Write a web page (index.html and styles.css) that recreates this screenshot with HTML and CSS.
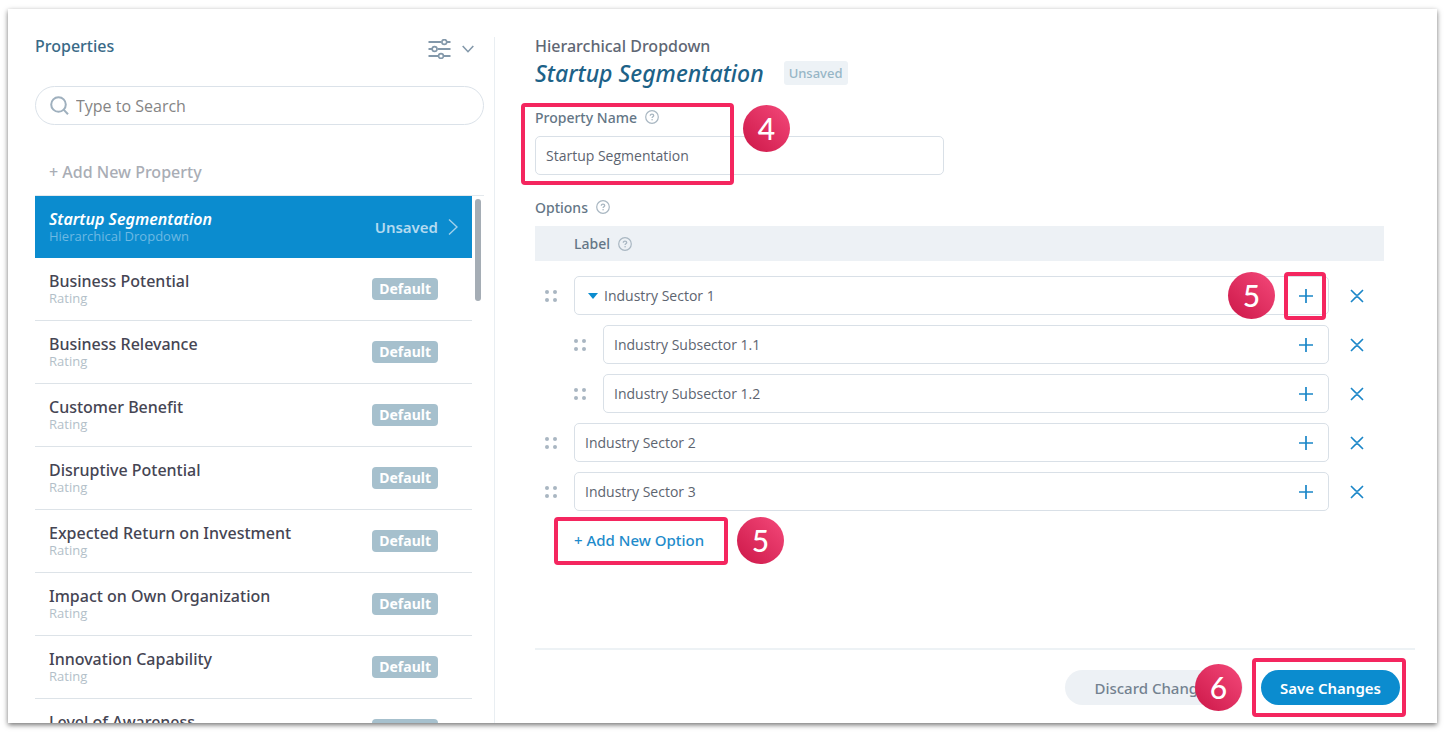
FILE: index.html
```html
<!DOCTYPE html>
<html lang="en">
<head>
    <meta charset="UTF-8">
    <meta name="viewport" content="width=device-width, initial-scale=1.0">
    <title>Properties</title>
    <link rel="stylesheet" href="styles.css">
</head>
<body>
    <!-- shared icons -->
    <svg class="sprite" aria-hidden="true">
        <symbol id="icon-help" viewBox="0 0 14 14">
            <circle cx="7" cy="7" r="6.3" fill="none" stroke="currentColor" stroke-width="1.2"/>
            <path d="M5.3 5.7c0-1 .7-1.6 1.7-1.6s1.7.6 1.7 1.5c0 1.2-1.6 1.2-1.6 2.4" fill="none" stroke="currentColor" stroke-width="1.3"/>
            <circle cx="7.1" cy="9.8" r=".8" fill="currentColor"/>
        </symbol>
        <symbol id="icon-plus" viewBox="0 0 14 14">
            <path d="M7 0v14M0 7h14" fill="none" stroke="currentColor" stroke-width="1.7"/>
        </symbol>
        <symbol id="icon-remove" viewBox="0 0 14 14">
            <path d="M1 1l4.600 4.600q1.400 1.200 2.800 0L13 1M1 13l4.600-4.600q1.400-1.200 2.800 0L13 13" fill="none" stroke="currentColor" stroke-width="1.6"/>
        </symbol>
        <symbol id="icon-drag" viewBox="0 0 12 12">
            <g fill="currentColor">
                <circle cx="2" cy="2" r="2"/>
                <circle cx="10" cy="2" r="2"/>
                <circle cx="2" cy="10" r="2"/>
                <circle cx="10" cy="10" r="2"/>
            </g>
        </symbol>
    </svg>

    <div class="dialog">
        <aside class="sidebar">
            <div class="sidebar-header">
                <h2>Properties</h2>
                <button class="filter-button" type="button" aria-label="Filter properties">
                    <svg width="23" height="20" viewBox="0 0 23 20" fill="none" stroke="currentColor" stroke-width="1.8">
                        <path d="M.5 3h13M19 3h3.500M.5 10h3.500M9.500 10h13M.5 17h9.500M16 17h6.500"/>
                        <circle cx="16.300" cy="3" r="2.400" stroke-width="1.600"/>
                        <circle cx="6.600" cy="10" r="2.400" stroke-width="1.600"/>
                        <circle cx="13" cy="17" r="2.400" stroke-width="1.600"/>
                    </svg>
                    <svg width="12" height="8" viewBox="0 0 12 8" fill="none" stroke="currentColor" stroke-width="1.6">
                        <path d="M.7 1L6 6.700 11.300 1"/>
                    </svg>
                </button>
            </div>

            <div class="search">
                <svg width="19" height="19" viewBox="0 0 19 19" fill="none" stroke="currentColor" stroke-width="2">
                    <circle cx="8.500" cy="8.500" r="7.300"/>
                    <path d="M13.600 13.600l4.400 4.600"/>
                </svg>
                <input type="text" placeholder="Type to Search" aria-label="Search properties">
            </div>

            <button class="add-property" type="button">+ Add New Property</button>

            <div class="list-wrap">
                <ul class="property-list">
                    <li class="active">
                        <a href="#">
                            <span class="property-text"><span class="name">Startup Segmentation</span><span class="type">Hierarchical Dropdown</span></span>
                            <span class="state">Unsaved</span>
                            <svg class="arrow" width="10" height="16" viewBox="0 0 10 16" fill="none" stroke="currentColor" stroke-width="1.400">
                                <path d="M1 .5L9 8 1 15.500"/>
                            </svg>
                        </a>
                    </li>
                    <li><a href="#"><span class="property-text"><span class="name">Business Potential</span><span class="type">Rating</span></span><span class="tag">Default</span></a></li>
                    <li><a href="#"><span class="property-text"><span class="name">Business Relevance</span><span class="type">Rating</span></span><span class="tag">Default</span></a></li>
                    <li><a href="#"><span class="property-text"><span class="name">Customer Benefit</span><span class="type">Rating</span></span><span class="tag">Default</span></a></li>
                    <li><a href="#"><span class="property-text"><span class="name">Disruptive Potential</span><span class="type">Rating</span></span><span class="tag">Default</span></a></li>
                    <li><a href="#"><span class="property-text"><span class="name">Expected Return on Investment</span><span class="type">Rating</span></span><span class="tag">Default</span></a></li>
                    <li><a href="#"><span class="property-text"><span class="name">Impact on Own Organization</span><span class="type">Rating</span></span><span class="tag">Default</span></a></li>
                    <li><a href="#"><span class="property-text"><span class="name">Innovation Capability</span><span class="type">Rating</span></span><span class="tag">Default</span></a></li>
                    <li><a href="#"><span class="property-text"><span class="name">Level of Awareness</span><span class="type">Rating</span></span><span class="tag">Default</span></a></li>
                </ul>
                <div class="scroll-thumb"></div>
            </div>
        </aside>

        <main class="editor">
            <p class="kind">Hierarchical Dropdown</p>
            <div class="title-row">
                <h1>Startup Segmentation</h1>
                <span class="unsaved">Unsaved</span>
            </div>

            <div class="field">
                <div class="caption">
                    <label for="property-name">Property Name</label>
                    <svg class="help"><use href="#icon-help"/></svg>
                </div>
                <input type="text" id="property-name" value="Startup Segmentation">
                <div class="marker marker-name"></div>
                <span class="step step-name">4</span>
            </div>

            <div class="caption options-caption">
                <span>Options</span>
                <svg class="help"><use href="#icon-help"/></svg>
            </div>
            <div class="options">
                <div class="caption options-head">
                    <span>Label</span>
                    <svg class="help"><use href="#icon-help"/></svg>
                </div>
                <ul class="option-list">
                    <li>
                        <svg class="drag"><use href="#icon-drag"/></svg>
                        <div class="option-box">
                            <button class="toggle" type="button" aria-label="Collapse"></button>
                            <input type="text" value="Industry Sector 1" aria-label="Option label">
                            <button class="icon-button" type="button" aria-label="Add sub-option"><svg><use href="#icon-plus"/></svg></button>
                            <div class="marker marker-plus"></div>
                            <span class="step step-plus">5</span>
                        </div>
                        <button class="icon-button" type="button" aria-label="Remove option"><svg><use href="#icon-remove"/></svg></button>
                    </li>
                    <li class="sub">
                        <svg class="drag"><use href="#icon-drag"/></svg>
                        <div class="option-box">
                            <input type="text" value="Industry Subsector 1.1" aria-label="Option label">
                            <button class="icon-button" type="button" aria-label="Add sub-option"><svg><use href="#icon-plus"/></svg></button>
                        </div>
                        <button class="icon-button" type="button" aria-label="Remove option"><svg><use href="#icon-remove"/></svg></button>
                    </li>
                    <li class="sub">
                        <svg class="drag"><use href="#icon-drag"/></svg>
                        <div class="option-box">
                            <input type="text" value="Industry Subsector 1.2" aria-label="Option label">
                            <button class="icon-button" type="button" aria-label="Add sub-option"><svg><use href="#icon-plus"/></svg></button>
                        </div>
                        <button class="icon-button" type="button" aria-label="Remove option"><svg><use href="#icon-remove"/></svg></button>
                    </li>
                    <li>
                        <svg class="drag"><use href="#icon-drag"/></svg>
                        <div class="option-box">
                            <input type="text" value="Industry Sector 2" aria-label="Option label">
                            <button class="icon-button" type="button" aria-label="Add sub-option"><svg><use href="#icon-plus"/></svg></button>
                        </div>
                        <button class="icon-button" type="button" aria-label="Remove option"><svg><use href="#icon-remove"/></svg></button>
                    </li>
                    <li>
                        <svg class="drag"><use href="#icon-drag"/></svg>
                        <div class="option-box">
                            <input type="text" value="Industry Sector 3" aria-label="Option label">
                            <button class="icon-button" type="button" aria-label="Add sub-option"><svg><use href="#icon-plus"/></svg></button>
                        </div>
                        <button class="icon-button" type="button" aria-label="Remove option"><svg><use href="#icon-remove"/></svg></button>
                    </li>
                </ul>
                <div class="add-option-wrap">
                    <button class="add-option" type="button">+ Add New Option</button>
                    <div class="marker marker-option"></div>
                    <span class="step step-option">5</span>
                </div>
            </div>

            <div class="footer">
                <button class="discard" type="button">Discard Changes</button>
                <div class="save-wrap">
                    <button class="save" type="button">Save Changes</button>
                    <div class="marker marker-save"></div>
                    <span class="step step-save">6</span>
                </div>
            </div>
        </main>
    </div>
</body>
</html>
```
FILE: styles.css
```css
* {
    box-sizing: border-box;
}

body {
    font-family: "Noto Sans", "Open Sans", sans-serif;
    font-size: 14px;
    color: #5d6470;
    background-color: #fff;
    margin: 0;
    padding: 9px 8px;
    height: 100vh;
}

button,
input {
    font-family: inherit;
    font-size: inherit;
    color: inherit;
    background: none;
    border: none;
    padding: 0;
    margin: 0;
}

button {
    cursor: pointer;
}

input {
    font-family: "Open Sans", "Noto Sans", sans-serif;
    outline: none;
    min-width: 0;
}

h1,
h2,
p,
ul {
    margin: 0;
    padding: 0;
}

ul {
    list-style: none;
}

svg {
    display: block;
    flex: none;
}

.sprite {
    display: none;
}

.dialog {
    display: flex;
    height: 100%;
    background-color: #fff;
    box-shadow: 0 2px 5px rgba(0, 0, 0, 0.55);
}

/* Sidebar */
.sidebar {
    display: flex;
    flex-direction: column;
    flex: 0 0 476px;
    padding: 25px 0 0 27px;
    overflow: hidden;
}

.sidebar-header {
    display: flex;
    justify-content: space-between;
    height: 52px;
    padding-right: 10px;
}

.sidebar-header h2 {
    font-size: 16px;
    line-height: 24px;
    font-weight: 500;
    color: #396a87;
}

.filter-button {
    display: flex;
    align-items: center;
    gap: 11px;
    height: 30px;
    color: #8398aa;
}

.search {
    display: flex;
    align-items: center;
    gap: 7px;
    height: 39px;
    padding: 0 14px;
    border: 1px solid #dbe2e9;
    border-radius: 20px;
    color: #9fb0be;
}

.search input {
    flex: 1;
    font-size: 16px;
    color: #777;
}

.search input::placeholder {
    color: #858585;
    opacity: 1;
}

.add-property {
    height: 24px;
    margin: 35px 0 11px;
    padding-left: 14px;
    text-align: left;
    font-size: 16px;
    font-weight: 500;
    color: #a9adb5;
}

.list-wrap {
    position: relative;
    flex: 1;
    min-height: 0;
    overflow: hidden;
    border-top: 1px solid #e4e9ed;
}

.property-list {
    margin-right: 12px;
}

.property-list a {
    display: flex;
    align-items: center;
    height: 63px;
    padding: 0 34px 0 14px;
    border-bottom: 1px solid #dde3e8;
    color: #454553;
    text-decoration: none;
}

.property-text {
    display: flex;
    flex-direction: column;
    flex: 1;
}

.name {
    font-size: 16px;
    line-height: 18px;
    font-weight: 500;
}

.type {
    font-family: "Open Sans", "Noto Sans", sans-serif;
    font-size: 13px;
    line-height: 16px;
    color: #b3bfc9;
}

.tag {
    padding: 0 7px;
    border-radius: 4px;
    background-color: #a6c0cd;
    color: #fff;
    line-height: 22px;
    font-weight: 700;
}

.property-list .active a {
    height: 62px;
    padding-right: 14px;
    border-bottom: none;
    background-color: #0b8ccf;
    color: #fff;
}

.active .name {
    font-weight: 600;
    font-style: italic;
}

.active .type {
    color: #6db9e3;
}

.state {
    font-size: 15px;
    font-weight: 600;
    color: #b3daf0;
}

.arrow {
    margin-left: 10px;
    color: #a0d1ec;
}

.scroll-thumb {
    position: absolute;
    top: 3px;
    right: 3px;
    width: 6px;
    height: 102px;
    border-radius: 3px;
    background-color: #a5adb5;
}

/* Editor */
.editor {
    display: flex;
    flex-direction: column;
    flex: 1;
    min-width: 0;
    margin: 28px 0 0 10px;
    padding: 0 22px 0 40px;
    border-left: 1px solid #e9eef2;
}

.kind {
    font-size: 16px;
    line-height: 18px;
    font-weight: 500;
    color: #5f6774;
}

.title-row {
    display: flex;
    align-items: center;
    gap: 20px;
    height: 36px;
}

.title-row h1 {
    font-size: 23px;
    line-height: 30px;
    font-weight: 500;
    font-style: italic;
    color: #1d6288;
}

.unsaved {
    padding: 0 5px;
    border-radius: 3px;
    background-color: #edf2f6;
    color: #97b6c6;
    font-size: 13px;
    line-height: 24px;
    font-weight: 500;
}

.caption {
    display: flex;
    align-items: center;
    gap: 8px;
    height: 20px;
    font-weight: 500;
    color: #647686;
}

.help {
    width: 14px;
    height: 14px;
    color: #a9b7c2;
}

.field {
    position: relative;
    display: flex;
    flex-direction: column;
    gap: 9px;
    margin-top: 16px;
}

.field > input {
    width: 409px;
    height: 39px;
    padding: 0 10px;
    border: 1px solid #d9e0e7;
    border-radius: 5px;
}

.options-caption {
    margin-top: 22px;
}

.options {
    margin: 9px 31px 0 0;
}

.options-head {
    height: 35px;
    padding-left: 39px;
    background-color: #edf1f5;
}

.option-list {
    display: flex;
    flex-direction: column;
    gap: 10px;
    margin-top: 15px;
}

.option-list li {
    display: flex;
    align-items: center;
    padding: 0 20px 0 10px;
}

.option-list .sub {
    padding-left: 39px;
}

.drag {
    width: 12px;
    height: 12px;
    margin-right: 17px;
    color: #a9b6c2;
}

.option-box {
    position: relative;
    display: flex;
    align-items: center;
    flex: 1;
    height: 39px;
    margin-right: 21px;
    padding: 0 15px 0 10px;
    border: 1px solid #d9e0e7;
    border-radius: 5px;
}

.option-box input {
    flex: 1;
}

.toggle {
    margin: 0 6px 0 3px;
    border: 5px solid transparent;
    border-top: 6px solid #0b8ccf;
    border-bottom: none;
}

.icon-button {
    color: #1a86c8;
}

.icon-button svg {
    width: 14px;
    height: 14px;
}

.add-option-wrap {
    position: relative;
    width: max-content;
    margin: 17px 0 0 39px;
}

.add-option {
    display: block;
    font-size: 15px;
    line-height: 24px;
    font-weight: 500;
    color: #1e8bcb;
}

.footer {
    display: flex;
    justify-content: flex-end;
    gap: 18px;
    margin-top: auto;
    padding: 20px 15px 18px 0;
    border-top: 2px solid #edf2f5;
}

.discard,
.save {
    height: 35px;
    border-radius: 18px;
    font-size: 15px;
    font-weight: 500;
}

.discard {
    padding: 0 29px;
    background-color: #edf1f5;
    color: #748290;
}

.save-wrap {
    position: relative;
}

.save {
    padding: 0 19px;
    background-color: #0b8ccf;
    color: #fff;
    font-weight: 600;
}

/* Tutorial markers over the controls */
.marker {
    position: absolute;
    border: 4px solid #f4265f;
    border-radius: 4px;
    pointer-events: none;
}

.step {
    position: absolute;
    width: 47px;
    height: 47px;
    border-radius: 50%;
    background: linear-gradient(to top right, #cc1748, #f4497a);
    color: #fff;
    font-family: Lato, sans-serif;
    font-size: 30px;
    line-height: 46px;
    font-weight: 500;
    text-align: center;
}

.marker-name {
    top: -4px;
    left: -14px;
    width: 213px;
    height: 82px;
}

.step-name {
    top: -2px;
    left: 208px;
}

.marker-plus {
    top: -5px;
    right: 2px;
    width: 42px;
    height: 48px;
}

.step-plus {
    top: -5px;
    right: 53px;
}

.marker-option {
    top: -11px;
    left: -20px;
    width: 174px;
    height: 48px;
}

.step-option {
    top: -11px;
    left: 163px;
}

.marker-save {
    top: -12px;
    left: -9px;
    right: -6px;
    bottom: -12px;
}

.step-save {
    top: -6px;
    left: -66px;
}
```
